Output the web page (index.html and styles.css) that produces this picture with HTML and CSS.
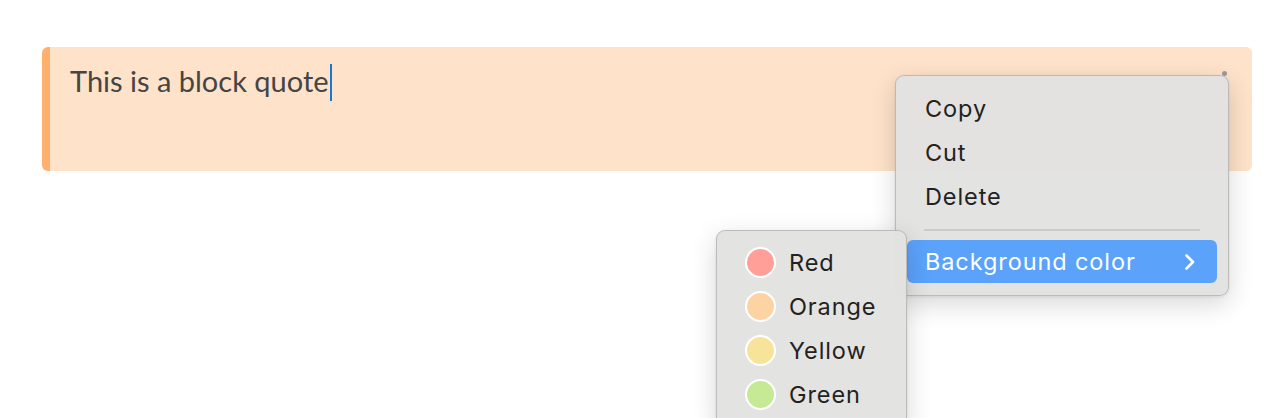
FILE: index.html
```html
<!DOCTYPE html>
<html lang="en">
<head>
<meta charset="utf-8">
<title>Block quote context menu</title>
<link rel="stylesheet" href="styles.css">
</head>
<body>
<main class="page">
  <div class="quote">
    <p class="quote-text">This is a block quote<span class="caret"></span></p>
    <span class="handle"></span>
  </div>

  <div class="menu context-menu">
    <div class="menu-item">Copy</div>
    <div class="menu-item">Cut</div>
    <div class="menu-item">Delete</div>
    <div class="separator"></div>
    <div class="menu-item active">
      <span>Background color</span>
      <svg class="chevron" width="12" height="18" viewBox="0 0 12 18"><path d="M2.5 2.5 L9 9 L2.5 15.5" fill="none" stroke="#fff" stroke-width="2.6" stroke-linecap="round" stroke-linejoin="round"/></svg>
    </div>
  </div>

  <div class="menu submenu">
    <div class="menu-item color"><span class="swatch red"></span>Red</div>
    <div class="menu-item color"><span class="swatch orange"></span>Orange</div>
    <div class="menu-item color"><span class="swatch yellow"></span>Yellow</div>
    <div class="menu-item color"><span class="swatch green"></span>Green</div>
  </div>
</main>
</body>
</html>
```

FILE: styles.css
```css
html, body {
  margin: 0;
  padding: 0;
  background: #ffffff;
  overflow: hidden;
}

.page {
  position: relative;
  width: 1280px;
  height: 418px;
  padding: 47px 28px 0 42px;
  box-sizing: border-box;
  overflow: hidden;
}

.quote {
  position: relative;
  height: 124px;
  box-sizing: border-box;
  background: #fee2c9;
  border-left: 8px solid #ffb06c;
  border-radius: 6px;
  padding: 16px 20px;
}

.quote-text {
  margin: 0;
  font-family: "Lato", "Open Sans", sans-serif;
  font-size: 29px;
  line-height: 36px;
  color: #454545;
  letter-spacing: 0;
}

.caret {
  display: inline-block;
  width: 2px;
  height: 37px;
  background: #1778d2;
  vertical-align: -9px;
  margin-left: 1px;
}

.handle {
  position: absolute;
  right: 25px;
  top: 24px;
  width: 5px;
  height: 5px;
  border-radius: 50%;
  background: #9a9a9e;
}

.menu {
  position: absolute;
  box-sizing: border-box;
  background: rgba(226, 226, 225, 0.96);
  border: 1px solid rgba(0, 0, 0, 0.18);
  border-radius: 9px;
  box-shadow: 0 8px 26px rgba(0, 0, 0, 0.16), 0 1px 3px rgba(0, 0, 0, 0.08);
  font-family: "Inter", "Liberation Sans", sans-serif;
  font-size: 23.5px;
  letter-spacing: 0.9px;
  color: #222;
}

.context-menu {
  left: 895px;
  top: 75px;
  width: 334px;
  padding: 10px 11px 12px 11px;
}

.submenu {
  left: 716px;
  top: 230px;
  width: 191px;
  padding: 9px 11px 12px;
  z-index: 2;
}

.menu-item {
  height: 44px;
  display: flex;
  align-items: center;
  padding: 0 18px;
  border-radius: 6px;
}

.menu-item.active {
  background: #5ba2fb;
  color: #fff;
  height: 43px;
  justify-content: space-between;
  padding-right: 21px;
}

.separator {
  height: 2px;
  background: #cacaca;
  margin: 11px 17px 9px 17px;
}

.menu-item.color {
  padding-left: 17px;
  gap: 13px;
}

.swatch {
  width: 27px;
  height: 27px;
  border-radius: 50%;
  border: 2px solid #ffffff;
  flex: none;
}

.red { background: #ff9f98; }
.orange { background: #fdd3a4; }
.yellow { background: #f8e39b; }
.green { background: #c6e995; }
```
